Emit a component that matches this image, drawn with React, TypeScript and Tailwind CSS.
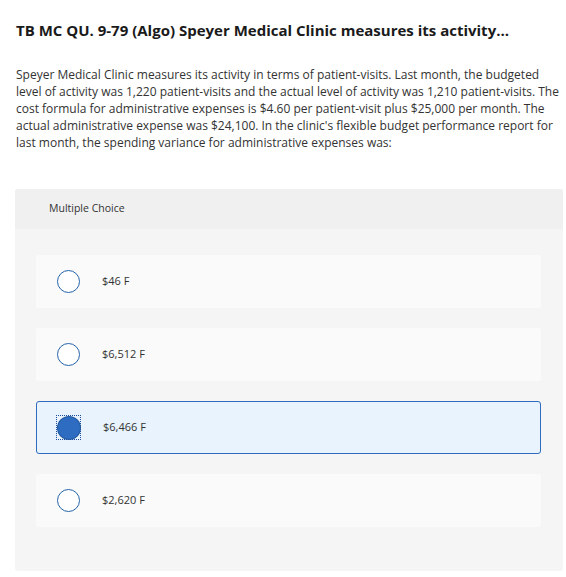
import React from "react";

const choices = [
  { id: "a", label: "$46 F" },
  { id: "b", label: "$6,512 F" },
  { id: "c", label: "$6,466 F", selected: true },
  { id: "d", label: "$2,620 F" },
];

const lines = [
  "Speyer Medical Clinic measures its activity in terms of patient-visits. Last month, the budgeted",
  "level of activity was 1,220 patient-visits and the actual level of activity was 1,210 patient-visits. The",
  "cost formula for administrative expenses is $4.60 per patient-visit plus $25,000 per month. The",
  "actual administrative expense was $24,100. In the clinic's flexible budget performance report for",
  "last month, the spending variance for administrative expenses was:",
];

export default function App() {
  return (
    <div className="min-h-[577px] w-[566px] bg-white text-[#222] [font-family:'Open_Sans',Lato,sans-serif]">
      <div className="px-4 pt-[21px]">
        <h1 className="text-[15px] font-bold leading-[18px] text-[#1a1a1a] whitespace-nowrap">
          TB MC QU. 9-79 (Algo) Speyer Medical Clinic measures its activity...
        </h1>
        <p className="mt-[27px] text-[12px] leading-[17px] text-[#333]">
          {lines.map((l) => (
            <span key={l} className="block whitespace-nowrap">
              {l}
            </span>
          ))}
        </p>
      </div>

      <div className="ml-[15px] mr-[3px] mt-[38px] rounded-[3px] bg-[#f5f5f5]">
        <div className="flex h-10 items-center rounded-t-[3px] bg-[#f0f0f0] pl-[34px] text-[10.5px] text-[#333]">
          Multiple Choice
        </div>
        <div className="flex flex-col gap-5 pb-[44px] pl-[21px] pr-[22px] pt-[26px]">
          {choices.map((c) => (
            <div
              key={c.id}
              className={
                c.selected
                  ? "flex h-[53px] items-center rounded-[3px] border border-[#2f6cbd] bg-[#e8f3fd] pl-[19px]"
                  : "flex h-[53px] items-center rounded-[3px] border border-transparent bg-[#fafafa] pl-[19px]"
              }
            >
              {c.selected ? (
                <span className="flex h-[25px] w-[25px] items-center justify-center border border-dotted border-[#1f4f9a]">
                  <span className="h-[22px] w-[22px] rounded-full bg-[#2d6cc0] ring-1 ring-[#22579e]" />
                </span>
              ) : (
                <span className="ml-px h-[23px] w-[23px] rounded-full border-[1.5px] border-[#2464a8] bg-white" />
              )}
              <span className="ml-[22px] text-[11px] text-[#333]">{c.label}</span>
            </div>
          ))}
        </div>
      </div>
    </div>
  );
}
